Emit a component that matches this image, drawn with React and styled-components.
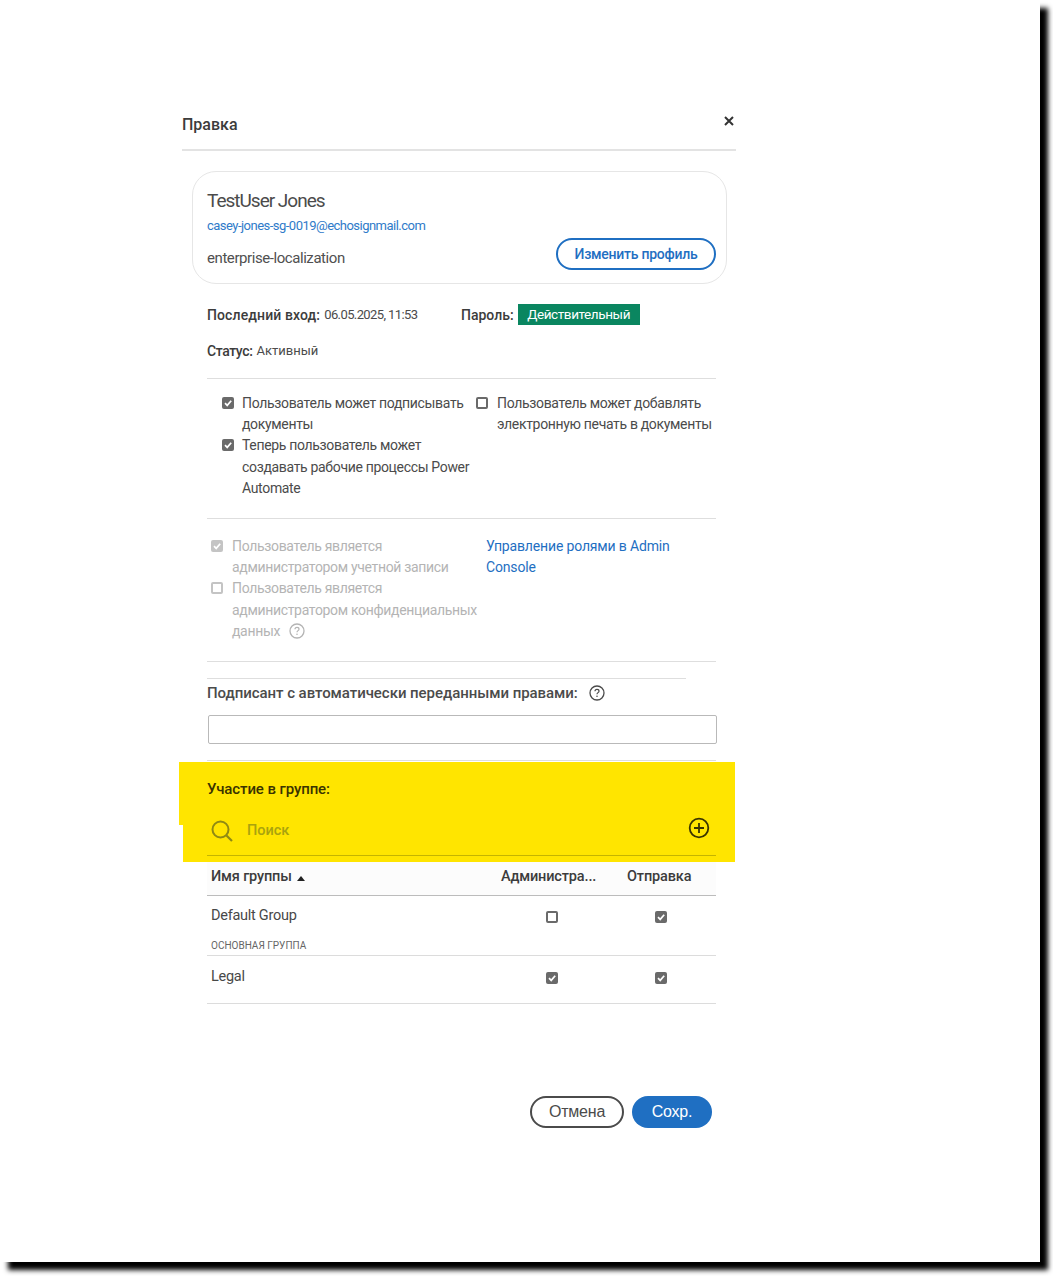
import React from "react";
import styled, { createGlobalStyle } from "styled-components";

const Global = createGlobalStyle`
  html, body { margin: 0; padding: 0; background: #fff; }
  body { font-family: Roboto, "Noto Sans", sans-serif; color: #4b4b4b; }
  * { box-sizing: border-box; }
`;
const Page = styled.div`width: 1053px; height: 1276px; overflow: hidden;`;
const Sheet = styled.div`
  width: 1040px; height: 1262px; background: #fff;
  box-shadow: 8px 8px 5px #000;
  padding: 108px 0 0 182px;
`;
const Dialog = styled.div`width: 554px; display: flex; flex-direction: column;`;
const Header = styled.header`
  height: 43px; border-bottom: 2px solid #e3e3e3; display: flex; justify-content: space-between;
`;
const Title = styled.h1`margin: 6px 0 0; font-size: 16px; line-height: 22px; font-weight: 500; color: #3c3c3c;`;
const Close = styled.svg`width: 10px; height: 10px; margin: 8px 2px 0 0; color: #333;`;
const Card = styled.section`
  margin: 20px 9px 0 10px; height: 113px; border: 1px solid #e6e6e6; border-radius: 24px;
  padding: 15px 10px 0 14px; position: relative; display: flex; flex-direction: column;
`;
const Name = styled.div`font-size: 19px; line-height: 27px; letter-spacing: -1px; color: #4b4b4b;`;
const Email = styled.a`font-size: 13px; line-height: 17px; margin-top: 3px; letter-spacing: -.52px; color: #2f7bc9;`;
const CardFoot = styled.div`display: flex; justify-content: space-between; align-items: flex-end; margin-top: 4px;`;
const Org = styled.div`font-size: 15px; line-height: 22px; letter-spacing: -.43px; color: #505050; margin-bottom: 1px;`;
const OutlineBtn = styled.button`
  width: 160px; height: 32px; border-radius: 16px; border: 2px solid #1f6fc2; background: #fff; padding: 0;
  font: 500 14px Roboto, sans-serif; letter-spacing: -.25px; color: #1f6fc2;
`;
const Body = styled.div`margin-left: 25px; width: 509px; display: flex; flex-direction: column;`;
const InfoRow = styled.div`display: flex; align-items: center; height: 21px; margin-top: 20px; font-size: 13px;`;
const Strong = styled.b`
  font-weight: 500; font-size: 14px; letter-spacing: ${p => p.$ls || 0}px; color: #3c3c3c; margin-right: 4px;
`;
const Value = styled.span`letter-spacing: ${p => p.$ls || 0}px;`;
const LoginCell = styled.span`width: 254px; display: flex; align-items: center;`;
const Badge = styled.span`
  width: 122px; height: 21px; background: #0a8660; color: #fff; font-size: 13.5px; letter-spacing: -.4px; line-height: 21px; text-align: center;
`;
const Status = styled(InfoRow)`margin-top: 15px;`;
const Rule = styled.hr`
  border: 0; height: 1px; margin: ${p => p.$mt || 0}px 0 0; background: #dedede; width: ${p => p.$w || 509}px;
`;
const Columns = styled.div`display: grid; grid-template-columns: ${p => p.$cols}; padding: ${p => p.$pad};`;
const Stack = styled.div`display: flex; flex-direction: column;`;
const Option = styled.div`
  display: flex; font-size: 14px; line-height: 21.2px; letter-spacing: -.33px; color: ${p => p.$off ? "#b4b4b4" : "#4b4b4b"};
`;
const BoxSlot = styled.span`flex: none; width: ${p => p.$w}px; padding-top: 4px;`;
const Box = styled.span`
  display: block; width: 12px; height: 12px; border-radius: 2px; position: relative;
  border: ${p => p.$on ? "0" : `2px solid ${p.$off ? "#c4c4c4" : "#6a6a6a"}`};
  background: ${p => p.$on ? (p.$off ? "#c4c4c4" : "#6a6a6a") : "#fff"};
`;
const Tick = styled.svg`position: absolute; inset: 0; width: 12px; height: 12px;`;
const Link = styled.a`font-size: 14px; line-height: 21px; letter-spacing: -.16px; color: #1f6fc2;`;
const HelpIcon = styled.svg`width: 16px; height: 16px; vertical-align: -3px; color: ${p => p.$c}; margin-left: ${p => p.$ml}px;`;
const Label = styled.div`font-size: 15px; line-height: 20px; font-weight: 500; letter-spacing: -.05px; color: #4b4b4b; margin-top: 4px;`;
const Field = styled.input`
  display: block; width: 509px; height: 29px; margin: 12px 0 0 1px; border: 1px solid #b9b9b9; border-radius: 2px; background: #fff;
`;
const Highlight = styled.section`
  margin: 1px 0 0 -28px; width: 556px; height: 100px; background: #ffe500; position: relative; padding: 17px 0 0 28px;
`;
const Notch = styled.span`position: absolute; left: 0; top: 63px; width: 4px; height: 37px; background: #fff;`;
const GroupTitle = styled.div`font-size: 15px; line-height: 20px; font-weight: 500; letter-spacing: -.1px; color: #3a3300;`;
const SearchBar = styled.div`
  width: 509px; height: 47px; margin-top: 10px; border-bottom: 1px solid #c4b400; display: flex; align-items: flex-start; position: relative;
`;
const SearchIcon = styled.svg`width: 23px; height: 23px; margin: 11px 0 0 4px; color: #8f8a14;`;
const Placeholder = styled.span`font-size: 14.5px; line-height: 20px; margin: 12px 0 0 13px; font-weight: 500; color: #a9a30e;`;
const Plus = styled.svg`width: 22px; height: 22px; margin: 8px 6px 0 auto; color: #3a3400;`;
const GroupRow = styled.div`
  display: grid; grid-template-columns: 290px 110px 1fr; height: ${p => p.$h}px; border-bottom: 1px solid ${p => p.$line || "#dcdcdc"}; background: ${p => p.$bg || "#fff"};
`;
const HeadCell = styled.div`
  font-size: 14.5px; font-weight: 500; letter-spacing: -.15px; color: #3c3c3c; line-height: 20px; padding: 5px 0 0 ${p => p.$pl}px; white-space: nowrap;
`;
const NameCell = styled.div`padding: ${p => p.$pt}px 0 0 4px; font-size: 14.5px; line-height: 20px; letter-spacing: -.27px; color: #484848;`;
const Sub = styled.div`font-size: 10px; line-height: 12px; margin-top: 14px; letter-spacing: 0; color: #666;`;
const CheckCell = styled.div`padding: ${p => p.$pt}px 0 0 ${p => p.$pl}px;`;
const Sort = styled.svg`width: 8px; height: 5px; margin-left: 5px;`;
const Footer = styled.footer`display: flex; justify-content: flex-end; gap: 8px; margin: 92px 4px 0 0;`;
const Pill = styled.button`
  height: 32px; width: ${p => p.$w}px; border-radius: 16px; padding: 0;
  font: 16px "Liberation Sans", Arial, sans-serif; letter-spacing: -.2px;
  border: ${p => p.$primary ? "0" : "2px solid #4b4b4b"};
  background: ${p => p.$primary ? "#1f6fc2" : "#fff"}; color: ${p => p.$primary ? "#fff" : "#4b4b4b"};
`;

const Check = ({ on, off }) => (
  <Box $on={on} $off={off}>
    {on && (
      <Tick viewBox="0 0 12 12" fill="none">
        <path d="M3 6.2 5.2 8.4 9.2 3.8" stroke="#fff" strokeWidth="1.7" />
      </Tick>
    )}
  </Box>
);
const Help = ({ c, ml }) => (
  <HelpIcon viewBox="0 0 16 16" fill="none" $c={c} $ml={ml}>
    <circle cx="8" cy="8" r="7" stroke="currentColor" strokeWidth="1.3" />
    <path d="M6 6.3C6 5 7 4.4 8 4.4s2 .7 2 1.8c0 1.4-2 1.5-2 3" stroke="currentColor" strokeWidth="1.2" />
    <circle cx="8" cy="11.3" r=".8" fill="currentColor" />
  </HelpIcon>
);
const Opt = ({ on, off, w, children }) => (
  <Option $off={off}>
    <BoxSlot $w={w}><Check on={on} off={off} /></BoxSlot>
    <span>{children}</span>
  </Option>
);

export default function App() {
  return (
    <Page>
      <Global />
      <Sheet>
        <Dialog>
          <Header>
            <Title>Правка</Title>
            <Close viewBox="0 0 10 10"><path d="M1 1l8 8M9 1 1 9" stroke="currentColor" strokeWidth="2" /></Close>
          </Header>
          <Card>
            <Name>TestUser Jones</Name>
            <Email>casey-jones-sg-0019@echosignmail.com</Email>
            <CardFoot>
              <Org>enterprise-localization</Org>
              <OutlineBtn>Изменить профиль</OutlineBtn>
            </CardFoot>
          </Card>
          <Body>
            <InfoRow>
              <LoginCell><Strong $ls={0.12}>Последний вход:</Strong><Value $ls={-0.6}>06.05.2025, 11:53</Value></LoginCell>
              <Strong>Пароль:</Strong>
              <Badge>Действительный</Badge>
            </InfoRow>
            <Status><Strong $ls={-0.4}>Статус:</Strong><Value>Активный</Value></Status>
            <Rule $mt={17} />
            <Columns $cols="254px 1fr" $pad="14px 0 19px 15px">
              <Stack>
                <Opt on w={20}>Пользователь может подписывать документы</Opt>
                <Opt on w={20}>Теперь пользователь может создавать рабочие процессы Power Automate</Opt>
              </Stack>
              <Stack>
                <Opt w={21}>Пользователь может добавлять электронную печать в документы</Opt>
              </Stack>
            </Columns>
            <Rule />
            <Columns $cols="275px 1fr" $pad="17px 0 19px 4px">
              <Stack>
                <Opt on off w={21}>Пользователь является администратором учетной записи</Opt>
                <Opt off w={21}>Пользователь является администратором конфиденциальных данных <Help c="#b4b4b4" ml={6} /></Opt>
              </Stack>
              <Link>Управление ролями в Admin Console</Link>
            </Columns>
            <Rule />
            <Rule $mt={16} $w={479} />
            <Label>Подписант с автоматически переданными правами: <Help c="#4b4b4b" ml={8} /></Label>
            <Field />
            <Rule $mt={16} />
            <Highlight>
              <Notch />
              <GroupTitle>Участие в группе:</GroupTitle>
              <SearchBar>
                <SearchIcon viewBox="0 0 23 23" fill="none">
                  <circle cx="9.5" cy="9.5" r="8" stroke="currentColor" strokeWidth="2" />
                  <path d="M15.5 15.5 21 21" stroke="currentColor" strokeWidth="2.2" />
                </SearchIcon>
                <Placeholder>Поиск</Placeholder>
                <Plus viewBox="0 0 22 22" fill="none">
                  <circle cx="11" cy="11" r="9.3" stroke="currentColor" strokeWidth="1.8" />
                  <path d="M11 6v10M6 11h10" stroke="currentColor" strokeWidth="1.8" />
                </Plus>
              </SearchBar>
            </Highlight>
            <GroupRow $h={34} $line="#bcbcbc" $bg="#fcfcfc">
              <HeadCell $pl={4}>Имя группы<Sort viewBox="0 0 8 5"><path d="M4 0l4 5H0z" fill="#222" /></Sort></HeadCell>
              <HeadCell $pl={4}>Администра...</HeadCell>
              <HeadCell $pl={20}>Отправка</HeadCell>
            </GroupRow>
            <GroupRow $h={60}>
              <NameCell $pt={10}>Default Group<Sub>ОСНОВНАЯ ГРУППА</Sub></NameCell>
              <CheckCell $pl={49} $pt={15}><Check /></CheckCell>
              <CheckCell $pl={48} $pt={15}><Check on /></CheckCell>
            </GroupRow>
            <GroupRow $h={48}>
              <NameCell $pt={11}>Legal</NameCell>
              <CheckCell $pl={49} $pt={16}><Check on /></CheckCell>
              <CheckCell $pl={48} $pt={16}><Check on /></CheckCell>
            </GroupRow>
            <Footer>
              <Pill $w={94}>Отмена</Pill>
              <Pill $w={80} $primary>Сохр.</Pill>
            </Footer>
          </Body>
        </Dialog>
      </Sheet>
    </Page>
  );
}
